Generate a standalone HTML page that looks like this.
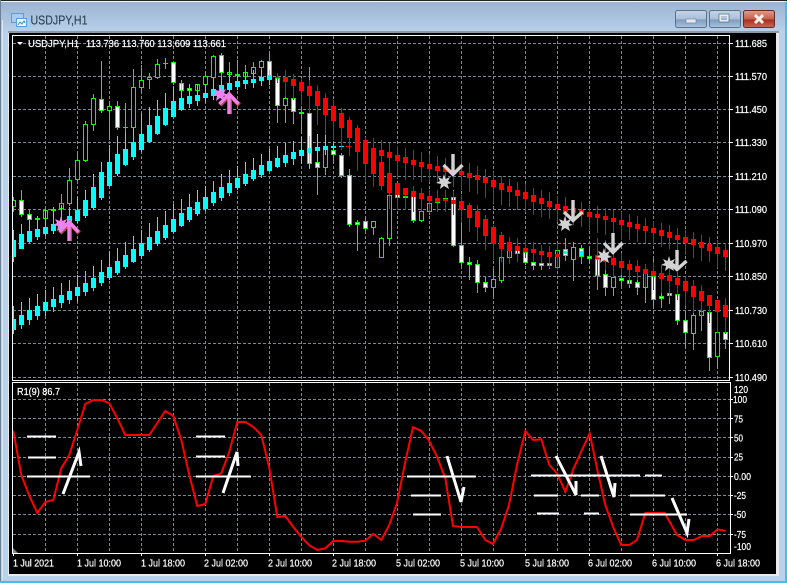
<!DOCTYPE html>
<html><head><meta charset="utf-8"><style>
html,body{margin:0;padding:0;background:#b9d1ea;width:787px;height:583px;overflow:hidden}
svg{display:block}
text{font-family:"Liberation Sans",sans-serif;font-size:10.5px;fill:#fff;stroke:#fff;stroke-width:.22px}
</style></head><body>
<svg width="787" height="583" viewBox="0 0 787 583" xmlns="http://www.w3.org/2000/svg">
<defs>
<linearGradient id="tb" x1="0" y1="0" x2="0" y2="1"><stop offset="0" stop-color="#98b2d0"/><stop offset="1" stop-color="#b9d1ea"/></linearGradient>
<linearGradient id="bb" x1="0" y1="0" x2="0" y2="1"><stop offset="0" stop-color="#c4d4e6"/><stop offset=".5" stop-color="#a9c0da"/><stop offset=".55" stop-color="#7f9cbd"/><stop offset="1" stop-color="#a8c4e0"/></linearGradient>
<linearGradient id="cb" x1="0" y1="0" x2="0" y2="1"><stop offset="0" stop-color="#dd9c90"/><stop offset=".5" stop-color="#c8604e"/><stop offset=".55" stop-color="#a8301e"/><stop offset="1" stop-color="#c86a58"/></linearGradient>
<clipPath id="m"><rect x="13" y="36" width="716" height="344"/></clipPath>
<clipPath id="s"><rect x="13" y="383" width="717" height="170"/></clipPath>
</defs>
<!-- window frame -->
<rect width="787" height="583" fill="#b9d1ea"/>
<rect x="0" y="0" width="787" height="33" fill="url(#tb)"/>
<rect x="0" y="0" width="787" height="1" fill="#222"/>
<rect x="1" y="1" width="785" height="1" fill="#f0f4f8"/>
<rect x="0" y="0" width="1" height="583" fill="#6b7f95"/>
<rect x="2" y="20" width="1" height="560" fill="#dce8f4"/>
<rect x="785" y="2" width="2" height="581" fill="#45c0dc"/>
<rect x="0" y="581" width="787" height="2" fill="#45c0dc"/>
<!-- icon -->
<g>
<rect x="11.500" y="13.500" width="12" height="9" fill="#a8cdf0" stroke="#5f9ad6"/>
<rect x="16.500" y="18.500" width="10" height="8" fill="#eef5fc" stroke="#5f9ad6"/>
<path d="M18 25l2-3 2 2 2-3 1 2" fill="none" stroke="#4a86c4"/>
</g>
<text x="30.500" y="24.500" style="font-size:12.500px;fill:#2b3d50;stroke:#2b3d50;stroke-width:.1px" textLength="57" lengthAdjust="spacingAndGlyphs">USDJPY,H1</text>
<!-- buttons -->
<rect x="675.500" y="10.500" width="31" height="17" rx="2" fill="url(#bb)" stroke="#5f7286"/>
<rect x="686" y="19" width="10" height="4" fill="#e4e9ef" stroke="#6b7c8e" stroke-width=".6"/>
<rect x="709.500" y="10.500" width="31" height="17" rx="2" fill="url(#bb)" stroke="#5f7286"/>
<rect x="720" y="15" width="8" height="6" fill="none" stroke="#e8edf2" stroke-width="2"/>
<rect x="719" y="14" width="10" height="8" fill="none" stroke="#55677a" stroke-width=".7"/>
<rect x="743.500" y="10.500" width="31" height="17" rx="2" fill="url(#cb)" stroke="#6a2a22"/>
<path d="M755 15l8 8M763 15l-8 8" stroke="#f4f0ee" stroke-width="3"/>
<!-- chart area -->
<rect x="8" y="31" width="771" height="545" fill="#e8ecf0"/>
<rect x="8" y="31" width="771" height="2" fill="#8d98a4"/>
<rect x="9" y="33" width="767" height="541" fill="#000"/>
<!-- grid -->
<g stroke="#778899" stroke-width="1" stroke-dasharray="3 2" fill="none">
<path d="M13 43.500H729M13 76.500H729M13 109.500H729M13 142.500H729M13 176.500H729M13 209.500H729M13 243.500H729M13 276.500H729M13 310.500H729M13 343.500H729M13 377.500H729"/>
<path d="M45.500 36V380M77.500 36V380M109.500 36V380M141.500 36V380M173.500 36V380M205.500 36V380M237.500 36V380M269.500 36V380M301.500 36V380M333.500 36V380M365.500 36V380M397.500 36V380M429.500 36V380M461.500 36V380M493.500 36V380M525.500 36V380M557.500 36V380M589.500 36V380M621.500 36V380M653.500 36V380M685.500 36V380M717.500 36V380"/>
<path d="M13 399.500H730M13 418.500H730M13 437.500H730M13 457.500H730M13 476.500H730M13 495.500H730M13 514.500H730M13 534.500H730"/>
<path d="M45.500 383V553M77.500 383V553M109.500 383V553M141.500 383V553M173.500 383V553M205.500 383V553M237.500 383V553M269.500 383V553M301.500 383V553M333.500 383V553M365.500 383V553M397.500 383V553M429.500 383V553M461.500 383V553M493.500 383V553M525.500 383V553M557.500 383V553M589.500 383V553M621.500 383V553M653.500 383V553M685.500 383V553M717.500 383V553"/>
</g>
<g clip-path="url(#m)" fill="none">
<!-- lime wicks -->
<path stroke="#0f0" d="M13.500 197V212M21.500 190V217M29.500 210V222M37.500 216V226M45.500 208V222M53.500 207V214M61.500 194V210M69.500 168V206M77.500 153V181M85.500 121V162M93.500 94V131M101.500 61V113M109.500 101V140M117.500 101V130M125.500 103V140M133.500 69V129M141.500 65V93M149.500 73V89M157.500 59V79M165.500 58V69M173.500 62V85M181.500 80V93M189.500 84V93M197.500 84V95M205.500 72V88M213.500 55V82M221.500 53V80M229.500 62V85M237.500 60V85M245.500 65V85M253.500 62V80M261.500 60V75M269.500 53V85M277.500 73V123M285.500 95V123M293.500 74V124M301.500 107V134M309.500 67V169M317.500 134V195M325.500 135V175M333.500 143V164M341.500 153V178M349.500 169V227M357.500 220V251M365.500 217V231M373.500 221V235M381.500 237V258M389.500 190V246M397.500 190V200M405.500 190V200M413.500 190V223M421.500 209V222M429.500 200V215M437.500 198V205M445.500 196V203M453.500 190V247M461.500 223V266M469.500 257V280M477.500 260V293M485.500 277V292M493.500 269V296M501.500 255V283M509.500 245V264M517.500 248V256M525.500 250V265M533.500 255V270M541.500 258V270M549.500 258V269M557.500 244V270M565.500 238V261M573.500 242V281M581.500 245V264M589.500 248V264M597.500 250V290M605.500 265V296M613.500 265V296M621.500 270V286M629.500 275V288M637.500 275V295M645.500 265V303M653.500 259V308M661.500 285V308M669.500 285V304M677.500 285V325M685.500 311V348M693.500 311V350M701.500 300V331M709.500 312V371M717.500 325V369M725.500 325V349"/>
<!-- lime bodies -->
<path stroke="#0f0" stroke-width="5" d="M13.500 200V207M21.500 200V215M29.500 214V220M37.500 218V220M45.500 210V219M53.500 209V211M61.500 203V209M69.500 180V204M77.500 160V180M85.500 124V161M93.500 98V125M101.500 99V111M109.500 106V111M117.500 106V128M125.500 127V128M133.500 87V128M141.500 80V88M149.500 77V80M157.500 64V78M165.500 63V64M173.500 62V83M181.500 83V91M189.500 88V91M197.500 84V91M205.500 76V85M213.500 56V78M221.500 55V73M229.500 72V75M237.500 74V76M245.500 72V77M253.500 67V74M261.500 61V68M269.500 61V76M277.500 78V106M285.500 98V106M293.500 98V112M301.500 112V114M309.500 113V164M317.500 162V168M325.500 149V168M333.500 150V155M341.500 155V176M349.500 175V225M357.500 222V225M365.500 221V229M373.500 221V228M381.500 238V258M389.500 195V239M397.500 194V198M405.500 196V198M413.500 195V221M421.500 211V221M429.500 203V212M437.500 201V203M445.500 198V200M453.500 197V246M461.500 245V263M469.500 262V265M477.500 264V283M485.500 282V288M493.500 279V288M501.500 257V281M509.500 250V258M517.500 250V254M525.500 252V263M533.500 262V266M541.500 263V266M549.500 263V266M557.500 250V268M565.500 249V256M573.500 247V260M581.500 248V257M589.500 256V259M597.500 259V276M605.500 274V288M613.500 277V288M621.500 278V281M629.500 280V284M637.500 282V288M645.500 273V288M653.500 276V300M661.500 296V299M669.500 293V296M677.500 294V321M685.500 320V333M693.500 315V334M701.500 311V316M709.500 312V358M717.500 332V357M725.500 332V340"/>
<!-- white fills -->
<path stroke="#fff" stroke-width="3" d="M21.500 201V214M29.500 215V219M101.500 100V110M117.500 107V127M173.500 63V82M181.500 84V90M189.500 89V90M221.500 56V72M269.500 62V75M277.500 79V105M293.500 99V111M309.500 114V163M317.500 163V167M333.500 151V154M341.500 156V175M349.500 176V224M357.500 223V224M365.500 222V228M397.500 195V197M413.500 196V220M453.500 198V245M461.500 246V262M469.500 263V264M477.500 265V282M485.500 283V287M517.500 251V253M525.500 253V262M533.500 263V265M541.500 264V265M549.500 264V265M565.500 250V255M581.500 249V256M589.500 257V258M597.500 260V275M605.500 275V287M621.500 279V280M629.500 281V283M637.500 283V287M653.500 277V299M661.500 297V298M669.500 294V295M677.500 295V320M685.500 321V332M709.500 313V357M725.500 333V339"/>
<!-- black fills -->
<path stroke="#000" stroke-width="3" d="M13.500 201V206M45.500 211V218M61.500 204V208M69.500 181V203M77.500 161V179M85.500 125V160M93.500 99V124M109.500 107V110M133.500 88V127M141.500 81V87M149.500 78V79M157.500 65V77M197.500 85V90M205.500 77V84M213.500 57V77M229.500 73V74M245.500 73V76M253.500 68V73M261.500 62V67M285.500 99V105M325.500 150V167M373.500 222V227M381.500 239V257M389.500 196V238M421.500 212V220M429.500 204V211M493.500 280V287M501.500 258V280M509.500 251V257M557.500 251V267M573.500 248V259M613.500 278V287M645.500 274V287M693.500 316V333M701.500 312V315M717.500 333V356"/>
<!-- cyan wicks -->
<path stroke="#0ff" d="M13.500 306V334M21.500 302V329M29.500 298V325M37.500 294V320M45.500 290V316M53.500 287V312M61.500 283V308M69.500 280V304M77.500 275V302M85.500 271V296M93.500 266V291M101.500 260V286M109.500 251V280M117.500 248V275M125.500 242V269M133.500 236V263M141.500 230V259M149.500 223V252M157.500 217V246M165.500 211V240M173.500 204V233M181.500 199V227M189.500 194V222M197.500 190V216M205.500 186V211M213.500 181V206M221.500 174V201M229.500 170V196M237.500 166V190M245.500 162V186M253.500 158V181M261.500 154V178M269.500 149V172M277.500 146V168M285.500 143V167M293.500 141V165M301.500 137V164M309.500 136V168M317.500 134V163M325.500 135V155M333.500 142V150M13.500 230V262M21.500 224V249M29.500 220V243M37.500 216V240M45.500 210V236M53.500 207V234M61.500 205V232M69.500 207V228M77.500 197V223M85.500 190V218M93.500 174V210M101.500 162V200M109.500 145V187M117.500 136V176M125.500 133V166M133.500 128V160M141.500 113V152M149.500 107V143M157.500 100V135M165.500 93V126M173.500 86V117M181.500 84V111M189.500 84V108M197.500 84V106M205.500 84V103M213.500 77V100M221.500 77V98M229.500 70V95M237.500 74V90M245.500 72V89M253.500 70V88M261.500 70V86M269.500 70V85"/>
<!-- cyan bodies -->
<path stroke="#0ff" stroke-width="5" d="M13.500 319V330M21.500 315V325M29.500 310V320M37.500 306V316M45.500 302V311M53.500 299V307M61.500 295V303M69.500 291V300M77.500 287V296M85.500 283V292M93.500 278V288M101.500 272V283M109.500 267V278M117.500 261V273M125.500 255V267M133.500 249V262M141.500 243V256M149.500 237V250M157.500 231V244M165.500 225V238M173.500 219V232M181.500 213V226M189.500 207V220M197.500 202V214M205.500 197V209M213.500 192V203M221.500 187V198M229.500 183V193M237.500 178V188M245.500 174V184M253.500 170V179M261.500 165V175M269.500 161V171M277.500 158V167M285.500 155V163M293.500 152V159M301.500 150V156M309.500 148V153M317.500 147V151M325.500 146V150M333.500 146V148M341.500 146V147M13.500 240V257M21.500 234V249M29.500 231V242M37.500 229V237M45.500 227V234M53.500 224V231M61.500 222V230M69.500 216V226M77.500 210V221M85.500 200V216M93.500 187V208M101.500 172V198M109.500 162V186M117.500 154V174M125.500 149V165M133.500 142V157M141.500 134V150M149.500 125V142M157.500 116V134M165.500 108V125M173.500 101V117M181.500 98V110M189.500 96V104M197.500 95V101M205.500 93V98M213.500 89V96M221.500 85V95M229.500 83V90M237.500 81V87M245.500 80V84M253.500 79V83M261.500 77V81M269.500 75V80"/>
<path stroke="#0ff" stroke-width="3" d="M565.500 251V254M581.500 251V256"/>
<!-- red wicks -->
<path stroke="#f00" d="M277.500 73V83M285.500 70V97M293.500 74V100M301.500 78V105M309.500 80V113M317.500 85V125M325.500 93V135M333.500 100V140M341.500 108V150M349.500 117V156M357.500 125V171M365.500 137V182M373.500 138V187M381.500 162V190M389.500 173V209M397.500 183V210M405.500 188V210M413.500 186V212M421.500 188V212M429.500 190V213M437.500 190V212M445.500 190V212M453.500 191V215M461.500 195V223M469.500 203V232M477.500 205V241M485.500 215V250M493.500 225V260M501.500 232V262M509.500 237V264M517.500 238V262M525.500 240V258M533.500 242V262M541.500 245V263M549.500 246V268M557.500 243V270M597.500 238V276M605.500 240V270M613.500 252V277M621.500 253V275M629.500 260V285M637.500 260V280M645.500 264V287M653.500 262V290M661.500 265V293M669.500 268V298M677.500 272V300M685.500 277V306M693.500 280V313M701.500 285V316M709.500 295V323M717.500 300V333M725.500 298V334M381.500 140V172M389.500 143V176M397.500 146V178M405.500 148V180M413.500 150V180M421.500 152V182M429.500 154V182M437.500 156V183M445.500 158V186M453.500 160V187M461.500 157V190M469.500 163V192M477.500 166V194M485.500 169V198M493.500 172V203M501.500 176V205M509.500 179V207M517.500 182V210M525.500 184V212M533.500 188V215M541.500 190V217M549.500 192V219M557.500 196V222M565.500 197V223M573.500 200V225M581.500 202V227M589.500 205V230M597.500 206V233M605.500 208V235M613.500 210V235M621.500 212V240M629.500 214V240M637.500 216V242M645.500 218V243M653.500 221V245M661.500 223V247M669.500 225V249M677.500 228V252M685.500 230V255M693.500 232V258M701.500 235V261M709.500 237V262M717.500 240V268M725.500 243V271"/>
<!-- red bodies -->
<path stroke="#f00" stroke-width="5" d="M277.500 77V78M285.500 77V82M293.500 79V86M301.500 82V91M309.500 86V96M317.500 91V106M325.500 98V115M333.500 106V121M341.500 113V128M349.500 120V138M357.500 128V152M365.500 140V164M373.500 148V174M381.500 162V186M389.500 173V193M397.500 183V195M405.500 188V195M413.500 191V197M421.500 193V199M429.500 196V201M437.500 198V202M445.500 199V201M453.500 200V204M461.500 201V210M469.500 205V218M477.500 211V227M485.500 219V236M493.500 227V244M501.500 235V249M509.500 242V251M517.500 246V251M525.500 248V252M533.500 249V253M541.500 251V255M549.500 252V257M557.500 254V257M597.500 255V259M605.500 256V262M613.500 258V265M621.500 261V268M629.500 264V270M637.500 266V272M645.500 269V274M653.500 271V276M661.500 273V279M669.500 275V281M677.500 278V285M685.500 281V291M693.500 286V297M701.500 291V301M709.500 295V306M717.500 300V312M725.500 305V317M381.500 150V156M389.500 152V158M397.500 155V161M405.500 157V163M413.500 160V165M421.500 162V167M429.500 164V169M437.500 166V171M445.500 168V172M453.500 170V174M461.500 171V175M469.500 173V178M477.500 175V180M485.500 177V183M493.500 180V187M501.500 183V190M509.500 186V192M517.500 190V196M525.500 192V199M533.500 195V202M541.500 198V204M549.500 201V207M557.500 204V209M565.500 206V212M573.500 208V213M581.500 210V215M589.500 212V217M597.500 214V218M605.500 216V220M613.500 218V222M621.500 220V225M629.500 222V227M637.500 224V229M645.500 226V231M653.500 228V233M661.500 230V236M669.500 232V238M677.500 235V240M685.500 237V243M693.500 239V245M701.500 242V248M709.500 244V251M717.500 247V254M725.500 250V257"/>
<path stroke="#f00" d="M346 146.500h5"/>
<!-- violet stars and arrows -->
<polygon fill="#ee82ee" points="61,216 62.500,221 67,219 65,223 69,225 64.500,226 66,231 61,228 57,231 58,226 53,225 57,223 55,219 59.500,221"/>
<polygon fill="#ee82ee" points="220,86 221.500,91 226,89 224,93 228,95 223.500,96 225,101 220,98 216,101 217,96 212,95 216,93 214,89 218.500,91"/>
<path stroke="#c8404a" stroke-width="4.400" d="M69.800 241V225M60 233l9.800-10 9.500 10M229.800 114V97M220 105l9.800-10 9.500 10"/>
<path stroke="#ee82ee" stroke-width="3.400" d="M69 241V223M59.500 232l9.500-10 9.500 10M229 114V95M219.500 104l9.500-10 9.500 10"/>
<!-- silver stars and arrows -->
<g fill="#d3d3d3">
<polygon points="444,174 445.500,179 450,177 448,181 452,183 447.500,184 449,189 444,186 440,189 441,184 436,183 440,181 438,177 442.500,179"/>
<polygon points="565,216 566.500,221 571,219 569,223 573,225 568.500,226 570,231 565,228 561,231 562,226 557,225 561,223 559,219 563.500,221"/>
<polygon points="604,248 605.500,253 610,251 608,255 612,257 607.500,258 609,263 604,260 600,263 601,258 596,257 600,255 598,251 602.500,253"/>
<polygon points="669,256 670.500,261 675,259 673,263 677,265 672.500,266 674,271 669,268 665,271 666,266 661,265 665,263 663,259 667.500,261"/>
</g>
<path stroke="#d3d3d3" stroke-width="3.400" d="M453 154V174M443.500 165l9.500 9.500 9.500-9.500M573 200V220M564 212l9 8.500 9.500-8.500M613 233V253M604 243l9 9.500 9.500-9.500M677 250V269M667.500 261l9.500 8.500 9.500-8.500"/>
</g>
<!-- indicator -->
<g clip-path="url(#s)" fill="none">
<polyline stroke="#f00" stroke-width="2" points="13.300,431 21.300,475 29.300,495.700 37.300,513 45.300,502 53.300,500 61.300,468.300 69.300,455 77.300,430 85.300,404 93.300,400 101.300,400 109.300,403.300 117.300,418.300 125.300,435 149.300,435 165.300,411 173.300,416 181.300,440 189.300,475 197.300,506 205.300,504 213.300,476 221.300,473.300 229.300,451.700 237.300,422 245.300,422 253.300,427 261.300,435 269.300,468 277.300,517 285.300,516 293.300,527 301.300,537 309.300,545.300 317.300,550 325.300,548.300 333.300,541 341.300,541 349.300,541.700 357.300,541.700 365.300,540.700 373.300,534 381.300,540 389.300,525 397,503 405.300,461.700 413,427.300 421.300,431 428.700,440 437,456.700 445.300,478.300 453,526 461,527 477,527 485.300,540 493,544 501.300,528.300 509,505 517,465 525.300,431 533,440 541.300,439.300 549.300,465 557,473.300 565.300,491.700 573.700,468.300 582,450 589.700,433.300 597.700,471.700 605.300,505 613.700,528.300 621.300,545 629.300,545 637,540 645.300,513 664.700,513 677,535 685.300,540 693.700,540 702,536 709.700,536 717.700,529.300 725.300,531"/>
<path stroke="#fff" stroke-width="2" d="M27 436.500H56M28 457.500H56M27 476.500H90M196 436.500H225M196 456.500H225M196 476.500H251M407 476.500H476M411 495.500H441M413 514.500H441M531 475.500H640M645 475.500H662M534 495.500H558M581 495.500H599M630 495.500H665M537 513.500H559M584 513.500H599M630 514.500H687"/>
<path stroke="#fff" stroke-width="3" d="M63 494L79 452L81 466M223 493L237 452L238 466M447 456L461 502L464 487M556 456L576 495V481M601 456L614 497L615 483M672 498L687 533L689 519"/>
</g>
<polygon points="13,548 13,553 18,553" fill="#778899"/>
<!-- frames -->
<g fill="none" stroke="#fff">
<path d="M12.500 35.500H729.500V380.500H12.500Z"/>
<path d="M12.500 382.500H730.500V553.500H12.500Z"/>
</g>
<path stroke="#fff" d="M729 43.500h4M729 76.500h4M729 109.500h4M729 142.500h4M729 176.500h4M729 209.500h4M729 243.500h4M729 276.500h4M729 310.500h4M729 343.500h4M729 377.500h4M730 399.500h3M730 418.500h3M730 437.500h3M730 457.500h3M730 476.500h3M730 495.500h3M730 514.500h3M730 534.500h3M13.500 553v3M77.500 553v3M141.500 553v3M205.500 553v3M269.500 553v3M333.500 553v3M397.500 553v3M461.500 553v3M525.500 553v3M589.500 553v3M653.500 553v3M717.500 553v3"/>
<!-- labels -->
<polygon points="17,42 23,42 20,45" fill="#fff"/>
<text x="28" y="47" textLength="51" lengthAdjust="spacingAndGlyphs">USDJPY,H1</text>
<text x="86" y="47" textLength="140" lengthAdjust="spacingAndGlyphs">113.736 113.760 113.609 113.661</text>
<g>
<text x="735" y="47" textLength="32" lengthAdjust="spacingAndGlyphs">111.685</text>
<text x="735" y="80" textLength="32" lengthAdjust="spacingAndGlyphs">111.570</text>
<text x="735" y="113" textLength="32" lengthAdjust="spacingAndGlyphs">111.450</text>
<text x="735" y="146" textLength="32" lengthAdjust="spacingAndGlyphs">111.330</text>
<text x="735" y="180" textLength="32" lengthAdjust="spacingAndGlyphs">111.210</text>
<text x="735" y="213" textLength="32" lengthAdjust="spacingAndGlyphs">111.090</text>
<text x="735" y="247" textLength="32" lengthAdjust="spacingAndGlyphs">110.970</text>
<text x="735" y="280" textLength="32" lengthAdjust="spacingAndGlyphs">110.850</text>
<text x="735" y="314" textLength="32" lengthAdjust="spacingAndGlyphs">110.730</text>
<text x="735" y="347" textLength="32" lengthAdjust="spacingAndGlyphs">110.610</text>
<text x="735" y="381" textLength="32" lengthAdjust="spacingAndGlyphs">110.490</text>
</g>
<text x="17" y="395" textLength="43" lengthAdjust="spacingAndGlyphs">R1(9) 86.7</text>
<g>
<text x="734" y="393" textLength="14" lengthAdjust="spacingAndGlyphs">120</text>
<text x="733" y="403" textLength="14" lengthAdjust="spacingAndGlyphs">100</text>
<text x="734" y="422.500" textLength="9" lengthAdjust="spacingAndGlyphs">75</text>
<text x="734" y="441.500" textLength="9" lengthAdjust="spacingAndGlyphs">50</text>
<text x="734" y="460.500" textLength="9" lengthAdjust="spacingAndGlyphs">25</text>
<text x="734" y="480" textLength="17" lengthAdjust="spacingAndGlyphs">0.00</text>
<text x="734" y="499" textLength="12" lengthAdjust="spacingAndGlyphs">-25</text>
<text x="734" y="518" textLength="12" lengthAdjust="spacingAndGlyphs">-50</text>
<text x="734" y="538" textLength="12" lengthAdjust="spacingAndGlyphs">-75</text>
<text x="734" y="550" textLength="17" lengthAdjust="spacingAndGlyphs">-100</text>
</g>
<g>
<text x="13" y="566.500" textLength="41" lengthAdjust="spacingAndGlyphs">1 Jul 2021</text>
<text x="77" y="566.500" textLength="44" lengthAdjust="spacingAndGlyphs">1 Jul 10:00</text>
<text x="141" y="566.500" textLength="44" lengthAdjust="spacingAndGlyphs">1 Jul 18:00</text>
<text x="204" y="566.500" textLength="44" lengthAdjust="spacingAndGlyphs">2 Jul 02:00</text>
<text x="268" y="566.500" textLength="44" lengthAdjust="spacingAndGlyphs">2 Jul 10:00</text>
<text x="332" y="566.500" textLength="44" lengthAdjust="spacingAndGlyphs">2 Jul 18:00</text>
<text x="396" y="566.500" textLength="44" lengthAdjust="spacingAndGlyphs">5 Jul 02:00</text>
<text x="460" y="566.500" textLength="44" lengthAdjust="spacingAndGlyphs">5 Jul 10:00</text>
<text x="525" y="566.500" textLength="44" lengthAdjust="spacingAndGlyphs">5 Jul 18:00</text>
<text x="588" y="566.500" textLength="44" lengthAdjust="spacingAndGlyphs">6 Jul 02:00</text>
<text x="652" y="566.500" textLength="44" lengthAdjust="spacingAndGlyphs">6 Jul 10:00</text>
<text x="716" y="566.500" textLength="44" lengthAdjust="spacingAndGlyphs">6 Jul 18:00</text>
</g>
</svg>
</body></html>
